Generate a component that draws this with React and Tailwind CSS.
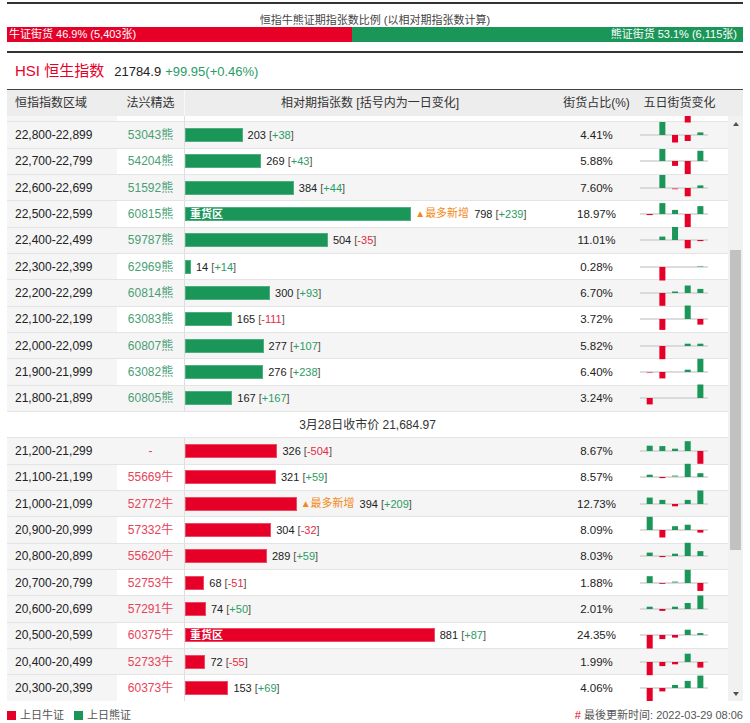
import React from "react";

const GREEN = "#1b9659";
const RED = "#e60028";

const bears = [
  { r: "", c: "", n: 85, d: 0, p: "", s: [0, 0, 0, -13.5, 0] },
  { r: "22,800-22,899", c: "53043熊", n: 203, d: 38, p: "4.41%", s: [0, 13, -7.5, -6, 2.6] },
  { r: "22,700-22,799", c: "54204熊", n: 269, d: 43, p: "5.88%", s: [0, 12, -4.9, -13, 10.2] },
  { r: "22,600-22,699", c: "51592熊", n: 384, d: 44, p: "7.60%", s: [0, 13, -1.5, -8.3, 2.6], lt: [2] },
  { r: "22,500-22,599", c: "60815熊", n: 798, d: 239, p: "18.97%", s: [-1.1, 10.9, 4.1, -13, 7.9], heavy: true, most: true },
  { r: "22,400-22,499", c: "59787熊", n: 504, d: -35, p: "11.01%", s: [0, 3.4, 13, -8.3, -1.1] },
  { r: "22,300-22,399", c: "62969熊", n: 14, d: 14, p: "0.28%", s: [0, -13.5, 0, 0, 1.1], lt: [4] },
  { r: "22,200-22,299", c: "60814熊", n: 300, d: 93, p: "6.70%", s: [0, -12.8, 1.5, 7.5, 4.1] },
  { r: "22,100-22,199", c: "63083熊", n: 165, d: -111, p: "3.72%", s: [0, -10.9, 0, 13.5, -5.6] },
  { r: "22,000-22,099", c: "60807熊", n: 277, d: 107, p: "5.82%", s: [0, -13.2, 0, 2.3, 2.3] },
  { r: "21,900-21,999", c: "63082熊", n: 276, d: 238, p: "6.40%", s: [-1.1, -6.4, 0, 2.3, 13.2], lt: [0] },
  { r: "21,800-21,899", c: "60805熊", n: 167, d: 167, p: "3.24%", s: [-6.4, 0, 0, 0, 13.5] },
];

const bulls = [
  { r: "21,200-21,299", c: "-", n: 326, d: -504, p: "8.67%", s: [5.3, 4.9, 2.3, 9.8, -12.8] },
  { r: "21,100-21,199", c: "55669牛", n: 321, d: 59, p: "8.57%", s: [2.3, -1.1, 1.9, 13.2, 3.8], lt: [2] },
  { r: "21,000-21,099", c: "52772牛", n: 394, d: 209, p: "12.73%", s: [6.4, 4.1, -2.3, 4.1, 13.5], most: true },
  { r: "20,900-20,999", c: "57332牛", n: 304, d: -32, p: "8.09%", s: [13.2, -7.5, 3.8, 5.3, -2.6] },
  { r: "20,800-20,899", c: "55620牛", n: 289, d: 59, p: "8.03%", s: [3.4, -1.1, 2.3, 13.2, 4.9] },
  { r: "20,700-20,799", c: "52753牛", n: 68, d: -51, p: "1.88%", s: [6.8, -0.8, 1.9, 13.2, -7.9], lt: [2] },
  { r: "20,600-20,699", c: "57291牛", n: 74, d: 50, p: "2.01%", s: [2.3, -1.9, 2.3, 6, 13.5] },
  { r: "20,500-20,599", c: "60375牛", n: 881, d: 87, p: "24.35%", s: [-13.5, -4.1, -2.6, 5.3, 1.9], heavy: true },
  { r: "20,400-20,499", c: "52733牛", n: 72, d: -55, p: "1.99%", s: [-13.2, -4.1, -2.3, 8.3, -5.6] },
  { r: "20,300-20,399", c: "60373牛", n: 153, d: 69, p: "4.06%", s: [-13.2, -3.4, 3, 7.1, 12.4] },
];

function Spark({ v, lt = [] }) {
  return (
    <svg width="70" height="26" viewBox="0 0 70 26" className="block overflow-visible">
      <line x1="0" x2="68" y1="13" y2="13" stroke="#d0d0d0" strokeWidth="1.5" />
      {v.map((x, k) =>
        x === 0 ? null : (
          <rect
            key={k}
            x={6.7 + k * 12.67}
            y={x > 0 ? 13 - x : 13}
            width="6"
            height={Math.abs(x)}
            fill={x > 0 ? GREEN : RED}
            opacity={lt.includes(k) ? 0.45 : 1}
          />
        )
      )}
    </svg>
  );
}

function Row({ row, gray, bull }) {
  const barCls = bull ? "bg-[#e60028] border-[#ee4a66]" : "bg-[#1b9659] border-[#4fae80]";
  return (
    <div className={`flex h-[26.33px] border-b border-[#e4e4e4] ${gray ? "bg-[#f5f5f5]" : "bg-white"}`}>
      <div className="w-[110px] shrink-0 bg-[#f5f5f5] pl-[8px] flex items-center text-[12px] leading-[14px] text-[#222]">
        {row.r}
      </div>
      <div
        className={`w-[67px] shrink-0 flex items-center justify-center text-[12px] leading-[14px] ${
          bull ? "text-[#e8425a]" : "text-[#4a9f77]"
        }`}
      >
        {row.c}
      </div>
      <div className="w-[371px] shrink-0 border-l border-[#dedede] flex items-center">
        <div
          className={`h-[14px] border shrink-0 flex items-center pl-[4px] text-white font-bold text-[11px] leading-[12px] ${barCls}`}
          style={{ width: row.n * 0.2835 }}
        >
          {row.heavy ? "重货区" : ""}
        </div>
        {row.most && (
          <span className="ml-[4px] text-[11px] leading-[14px] text-[#f28a1a] whitespace-nowrap">
            <span className="text-[10px]">▲</span>最多新增
          </span>
        )}
        {row.p && (
          <span className="ml-[5px] text-[11px] leading-[14px] text-[#222] whitespace-nowrap">
            {row.n} <span className="text-[#5a5040]">[</span>
            <span className={row.d < 0 ? "text-[#e8283f]" : "text-[#2a9c66]"}>
              {row.d < 0 ? row.d : "+" + row.d}
            </span>
            <span className="text-[#5a5040]">]</span>
          </span>
        )}
      </div>
      <div className="w-[83px] shrink-0 flex items-center justify-center text-[11.5px] leading-[14px] text-[#222]">
        {row.p}
      </div>
      <div className="w-[90px] shrink-0 flex items-center pl-[2px]">
        <Spark v={row.s} lt={row.lt} />
      </div>
    </div>
  );
}

function Arrow({ up }) {
  return (
    <svg width="6" height="4" viewBox="0 0 6 4" className="block">
      <polygon points={up ? "0,4 6,4 3,0" : "0,0 6,0 3,4"} fill="#505050" />
    </svg>
  );
}

export default function App() {
  return (
    <div className="w-[750px] h-[723px] bg-white px-[7px] pt-[2px] font-[family-name:'Liberation_Sans','Noto_Sans_CJK_SC',sans-serif] overflow-hidden">
      <div className="h-[2px] bg-[#333]" />
      <div className="mt-[10px] text-center text-[11px] leading-[13px] text-[#444]">
        恒指牛熊证期指张数比例 (以相对期指张数计算)
      </div>
      <div className="flex h-[15px] text-white text-[11px] leading-[15px]">
        <div className="w-[46.9%] bg-[#e60028] pl-[2px] whitespace-nowrap">牛证街货 46.9% (5,403张)</div>
        <div className="flex-1 bg-[#1b9659] pr-[6px] text-right whitespace-nowrap">熊证街货 53.1% (6,115张)</div>
      </div>
      <div className="mt-[9px] h-[2px] bg-[#333]" />

      <div className="h-[36px] flex items-center pl-[8px]">
        <div className="flex items-baseline leading-[18px]">
          <span className="text-[15px] text-[#e60028]">HSI 恒生指数</span>
          <span className="ml-[10px] text-[13px] text-[#222]">21784.9</span>
          <span className="ml-[4px] text-[13px] text-[#2a9c66]">+99.95(+0.46%)</span>
        </div>
      </div>

      <div className="flex h-[27px] border-t border-[#444] bg-[#ededed] text-[12px] leading-[14px] text-[#333]">
        <div className="w-[110px] shrink-0 pl-[8px] flex items-center">恒指指数区域</div>
        <div className="w-[67px] shrink-0 flex items-center justify-center">法兴精选</div>
        <div className="w-[371px] shrink-0 border-l border-[#f8f8f8] flex items-center justify-center">
          相对期指张数 [括号内为一日变化]
        </div>
        <div className="w-[83px] shrink-0 flex items-center justify-center">街货占比(%)</div>
        <div className="flex-1 flex items-center justify-center pr-[22px]">五日街货变化</div>
      </div>

      <div className="flex h-[585px]">
        <div className="w-[721px] overflow-hidden">
          <div className="mt-[-20px]">
            {bears.map((row, i) => (
              <Row key={"b" + i} row={row} gray={i % 2 === 1} bull={false} />
            ))}
            <div className="h-[26.33px] border-b border-[#e4e4e4] bg-white flex items-center justify-center text-[12px] leading-[14px] text-[#333]">
              3月28日收市价 21,684.97
            </div>
            {bulls.map((row, i) => (
              <Row key={"u" + i} row={row} gray={i % 2 === 0} bull />
            ))}
          </div>
        </div>
        <div className="w-[15px] bg-[#f1f1f1] flex flex-col items-center">
          <div className="h-[15px] flex items-center justify-center">
            <Arrow up />
          </div>
          <div className="mt-[119px] w-[11px] h-[300px] bg-[#c1c1c1]" />
          <div className="flex-1" />
          <div className="h-[15px] flex items-center justify-center">
            <Arrow />
          </div>
        </div>
      </div>

      <div className="flex justify-between pt-[7px] text-[11px] leading-[14px] text-[#555]">
        <div className="flex items-center">
          <span className="w-[9px] h-[9px] bg-[#e60028]" />
          <span className="ml-[4px]">上日牛证</span>
          <span className="ml-[10px] w-[9px] h-[9px] bg-[#1b9659]" />
          <span className="ml-[4px]">上日熊证</span>
        </div>
        <div>
          <span className="text-[#e60028]">#</span> 最後更新时间: 2022-03-29 08:06
        </div>
      </div>
    </div>
  );
}
